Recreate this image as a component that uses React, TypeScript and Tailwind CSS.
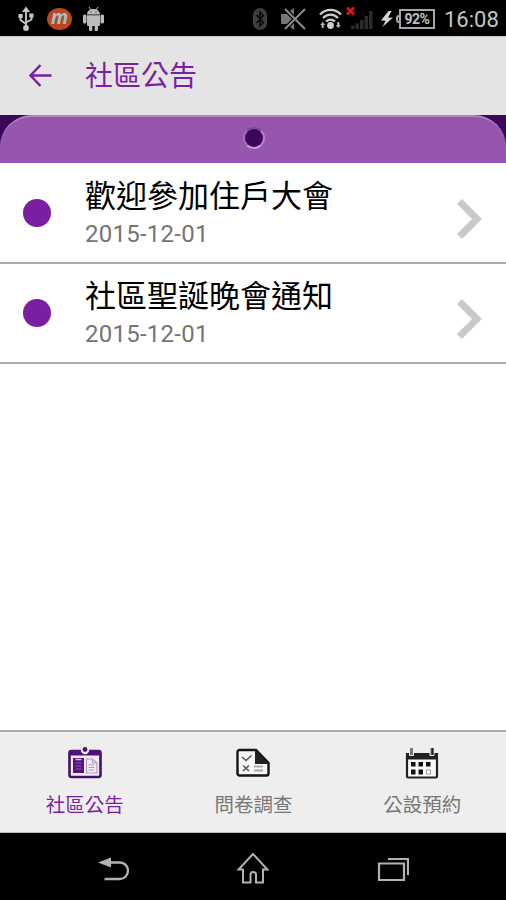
type Notice = { title: string; date: string };

const notices: Notice[] = [
  { title: "歡迎參加住戶大會", date: "2015-12-01" },
  { title: "社區聖誕晚會通知", date: "2015-12-01" },
];

const StatusBar = () => (
  <div className="flex h-9 shrink-0 items-center justify-between bg-black pt-px pr-[7px] pl-[18px]">
    <div className="flex items-center">
      {/* usb */}
      <svg className="h-[26px] w-4" viewBox="0 0 16 26" fill="none" stroke="#c4c4c4" strokeWidth="1.9">
        <path d="M8 4v18M2.500 10v4l5.500 4M13.500 10v3.500L8 16.500" />
        <path d="M8 .5 12 6H4z" fill="#c4c4c4" stroke="none" />
        <circle cx="8" cy="22" r="2.900" fill="#c4c4c4" stroke="none" />
        <path d="M.5 8h4.200v4H.5zM11.300 7.500h4.200v4h-4.200z" fill="#c4c4c4" stroke="none" />
      </svg>
      <div className="ml-[13px] flex h-[22px] w-[25px] items-center justify-center rounded-[50%] bg-[#bf4420]">
        <span className="-mt-[3px] font-['Open_Sans',sans-serif] text-[19px] leading-none font-bold text-[#9fc0cc] italic">m</span>
      </div>
      {/* android */}
      <svg className="ml-[11px] h-[26px] w-[21px]" viewBox="0 0 21 26" fill="#bcbcbc">
        <path d="M6 1 8 4M15 1l-2 3" stroke="#bcbcbc" strokeWidth="1" />
        <path d="M4 8.500C4 1 17 1 17 8.500zM4 9.300h13V19a1 1 0 0 1-1 1H5a1 1 0 0 1-1-1z" />
        <rect y="8.500" width="3.500" height="9" rx="1.500" />
        <rect x="17.500" y="8.500" width="3.500" height="9" rx="1.500" />
        <rect x="6" y="18" width="3.300" height="7" rx="1.300" />
        <rect x="11.700" y="18" width="3.300" height="7" rx="1.300" />
        <circle cx="8" cy="6" r=".7" fill="#444" />
        <circle cx="13" cy="6" r=".7" fill="#444" />
      </svg>
    </div>

    <div className="flex items-center">
      {/* bluetooth */}
      <svg className="h-[22px] w-3.5" viewBox="0 0 14 22">
        <rect width="14" height="22" rx="7" fill="#3e3e3e" />
        <path d="m3.500 7 7 7.500L7 18V4l3.500 3.500-7 7.500" fill="none" stroke="#080808" strokeWidth="1.500" />
      </svg>
      {/* sound off */}
      <svg className="ml-[13px] h-6 w-[27px]" viewBox="0 0 27 24">
        <path d="M1 7h5l8-6v22l-8-6H1z" fill="#777" />
        <path d="m5 2 20 20M25 2 5 22" stroke="#000" strokeWidth="4.500" />
        <path d="m5 2 20 20M25 2 5 22" stroke="#8c8c8c" strokeWidth="2" />
      </svg>
      {/* wifi */}
      <svg className="ml-3 h-[22px] w-[23px]" viewBox="0 0 23 22" fill="none" stroke="#cfcfcf" strokeWidth="2.200">
        <path d="M1 6.500c6-6.300 15-6.300 21 0M4 10c4.500-4.500 10.500-4.500 15 0M7 13.500c3-2.600 6-2.600 9 0" />
        <circle cx="11.500" cy="17.500" r="3.400" fill="#cfcfcf" stroke="none" />
        <path d="m1.200 17 2.500-3 2.500 3H4.700v3h-2v-3zM16.800 17h1.500v-3h2v3h1.500l-2.500 3z" fill="#bbb" stroke="none" />
      </svg>
      {/* no signal */}
      <svg className="ml-1 h-[23px] w-7" viewBox="0 0 28 23">
        <path d="M5 18.500h3.500V22H5zM9.500 16.500H13V22H9.500zM14 13h3.500v9H14zM18.500 9H22v13h-3.500zM23 4h3.500v18H23z" fill="#2b2b2b" />
        <path d="m1 .5 7 7M8 .5l-7 7" stroke="#e01414" strokeWidth="2.800" />
      </svg>
      {/* charging */}
      <svg className="ml-[7px] h-4 w-3" viewBox="0 0 12 16" fill="#d5d5d5">
        <path d="M7.500 0 0 9.500l4.500.3-3 6.200L12 6.500l-5 .3L10.500 0z" />
      </svg>
      <div className="ml-[3px] flex items-center">
        <div className="h-2 w-[3px] rounded-l-sm border-y-2 border-l-2 border-[#a5a5a5]" />
        <div className="flex h-5 w-[36px] items-center justify-center border-2 border-[#a5a5a5] font-['Roboto',sans-serif] text-[14px] leading-none font-bold tracking-[-0.5px] text-[#c0c0c0]">92%</div>
      </div>
      <span className="ml-[9px] w-[55px] pt-px font-['Roboto',sans-serif] text-[22px] leading-[35px] whitespace-nowrap text-[#c4c4c4]">16:08</span>
    </div>
  </div>
);

const AppHeader = () => (
  <header className="flex h-[79px] shrink-0 items-center border-t border-[#c8c8c8] bg-[#e4e4e4] pl-7">
    <svg className="mb-0.5 h-6 w-6" viewBox="0 0 24 24" fill="none" stroke="#7b1fa2" strokeWidth="2.500">
      <path d="M23.500 12.500H2.500M12.500 2 2.500 12.500 12.500 23" />
    </svg>
    <h1 className="mb-[5px] ml-[33px] font-['Noto_Sans_CJK_TC',sans-serif] text-[28px] leading-none text-[#7b1fa2]">社區公告</h1>
  </header>
);

const Banner = () => (
  <div className="h-12 shrink-0 bg-[#3c0758]">
    <div className="flex h-full justify-center rounded-t-[32px] border-t-2 border-[#b583c4] bg-[#9655ae] pt-[10px]">
      <div className="ml-px h-[22px] w-[22px] rounded-full border-2 border-t-[#8247a0] border-r-[#b583c8] border-b-[#c79bd5] border-l-[#a86bbb] bg-[#3c0758]" />
    </div>
  </div>
);

const NoticeRow = ({ title, date }: Notice) => (
  <li className="flex h-[100px] items-center border-b-2 border-[#acacac] bg-white pr-6 pl-[23px]">
    <span className="h-7 w-7 rounded-full bg-[#7b1fa2]" />
    <div className="ml-[34px] flex-1">
      <div className="font-['Noto_Sans_CJK_TC',sans-serif] text-[31px] leading-[40px] text-black">{title}</div>
      <div className="pt-0.5 font-['Roboto',sans-serif] text-[24px] leading-[36px] tracking-[0.25px] text-[#747474]">{date}</div>
    </div>
    <svg className="mt-[11px] h-10 w-[25px]" viewBox="0 0 25 40" fill="none" stroke="#c9c9c9" strokeWidth="7">
      <path d="m2.500 2.500 17.500 17.500L2.500 37.500" />
    </svg>
  </li>
);

const BoardIcon = () => (
  <svg className="h-8 w-[34px]" viewBox="0 0 34 32">
    <rect x="1.500" y="4" width="31" height="26" rx="2" fill="#f3edf5" stroke="#44106a" strokeWidth="2.600" />
    <path d="M1 3.500h32v5H1z" fill="#4f1078" />
    <circle cx="17" cy="3" r="4.200" fill="#eee" />
    <circle cx="17" cy="2.500" r="2.400" fill="#4f1078" />
    <path d="M5 11h11v15H5z" fill="#581080" />
    <path d="M7.500 12.500h6" stroke="#d3bedd" strokeWidth="1.500" />
    <path d="M7.500 16h6M7.500 19h6M7.500 22h6" stroke="#8b5aa5" />
    <path d="M18.500 12h6l4.500 4v10H18.500zM24.500 12v4H29M20.500 18h6M20.500 20.500h6M20.500 23h6" fill="none" stroke="#b39ac0" strokeWidth="1.200" />
  </svg>
);

const SurveyIcon = () => (
  <svg className="h-8 w-[34px]" viewBox="0 0 34 32" fill="none">
    <path d="M3.500 3H20l12.500 13v10.500a2 2 0 0 1-2 2h-27a2 2 0 0 1-2-2V5a2 2 0 0 1 2-2z" fill="#f7f7f7" stroke="#151515" strokeWidth="2.400" />
    <path d="M19 3v14h13.500z" fill="#222" />
    <path d="m6 10 4 3.500 5.500-5M7 18.500l6 5.500M13 18.500 7 24" stroke="#555" strokeWidth="1.600" />
    <path d="M18 19.500h9M18 23.500h9" stroke="#aaa" strokeWidth="1.800" />
  </svg>
);

const CalendarIcon = () => (
  <svg className="h-8 w-[34px]" viewBox="0 0 34 32">
    <rect x="2" y="7" width="30" height="23.500" rx="1" fill="#f7f7f7" stroke="#222" strokeWidth="2.200" />
    <path d="M1 6h32v6.500H1z" fill="#222" />
    <path d="M4.500.5h4v8h-4zM25 .5h4v8h-4z" fill="#777" stroke="#eee" />
    <path d="M27.500 1v7" stroke="#222" strokeWidth="2" />
    <path d="M6 15h4.500v4.500H6zM13.500 15H18v4.500h-4.500zM21 15h4.500v4.500H21zM6 22.500h4.500v5H6zM13.500 22.500H18v5h-4.500z" fill="#111" />
    <path d="M21.500 23h4v4h-4z" fill="#fff" stroke="#999" />
  </svg>
);

const tabs = [
  { label: "社區公告", Icon: BoardIcon, active: true },
  { label: "問卷調查", Icon: SurveyIcon, active: false },
  { label: "公設預約", Icon: CalendarIcon, active: false },
];

const TabBar = () => (
  <nav className="grid h-[103px] shrink-0 grid-cols-3 border-t-2 border-b border-t-[#aaa] border-b-[#bbb] bg-[#eee]">
    {tabs.map(({ label, Icon, active }) => (
      <div key={label} className="flex flex-col items-center pt-[15px] pl-px">
        <Icon />
        <span className={`mt-[11px] font-['Noto_Sans_CJK_TC',sans-serif] text-[19.500px] leading-[28px] ${active ? "text-[#7b1fa2]" : "text-[#777]"}`}>{label}</span>
      </div>
    ))}
  </nav>
);

const SystemNav = () => (
  <div className="grid h-[67px] shrink-0 grid-cols-3 items-center bg-black pt-1">
    <svg className="ml-[98px] h-[30px] w-8" viewBox="0 0 32 30" fill="none" stroke="#b2b2b2" strokeWidth="2.300">
      <path d="M12 8.500h10c4.500 0 8 3.500 8 8s-3.500 8.500-8 8.500H6.500" />
      <path d="m0 8.500 13-5v10z" fill="#b2b2b2" stroke="none" />
    </svg>
    <svg className="mx-auto h-8 w-8" viewBox="0 0 32 32" fill="none" stroke="#b2b2b2" strokeWidth="2">
      <path d="M16 1 1.500 16.500H6V29.500h7.500V22c0-4 5.500-4 5.500 0v7.500h7v-13h4.500z" />
    </svg>
    <svg className="ml-10 h-[30px] w-8" viewBox="0 0 32 30" fill="none" stroke="#b2b2b2" strokeWidth="2.200">
      <path d="M2 9.500h25V26H2zM11 5h20v16" />
    </svg>
  </div>
);

const App = () => {
  return (
    <div className="flex h-[900px] w-[506px] flex-col overflow-hidden bg-white">
      <StatusBar />
      <AppHeader />
      <Banner />
      <ul className="flex-1 pt-[1px]">
        {notices.map((notice) => (
          <NoticeRow key={notice.title} {...notice} />
        ))}
      </ul>
      <TabBar />
      <SystemNav />
    </div>
  );
};

export default App;
